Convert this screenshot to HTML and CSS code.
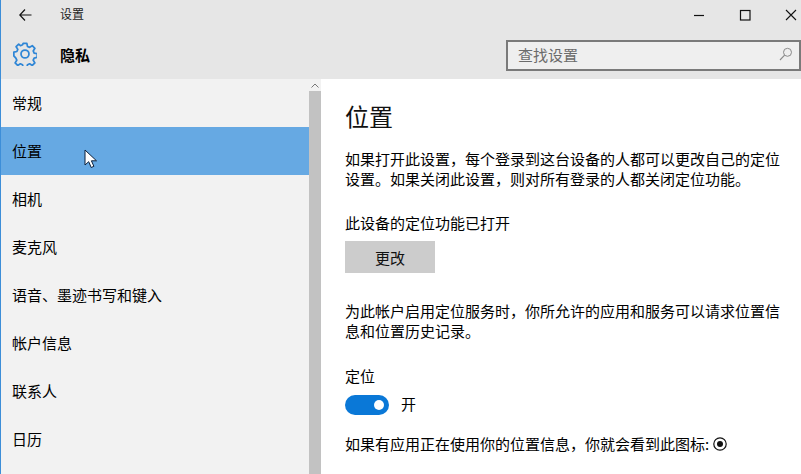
FILE: index.html
```html
<!DOCTYPE html>
<html lang="zh-CN">
<head>
<meta charset="utf-8">
<title>设置</title>
<link rel="stylesheet" href="styles.css">
</head>
<body>
<div class="window">
  <header class="header">
    <div class="titlebar">
      <svg class="back" width="13" height="12" viewBox="0 0 13 12"><path d="M6 .5.8 6 6 11.500M.8 6H12.500" fill="none" stroke="#111" stroke-width="1.200"/></svg>
      <span class="app-title">设置</span>
      <div class="controls">
        <svg class="ctl" width="46" height="30" viewBox="0 0 46 30"><path d="M18 15.500h10" stroke="#111" stroke-width="1.200"/></svg>
        <svg class="ctl" width="46" height="30" viewBox="0 0 46 30"><rect x="18.500" y="10.500" width="9.500" height="9.500" fill="none" stroke="#111" stroke-width="1.200"/></svg>
        <svg class="ctl" width="33" height="30" viewBox="0 0 33 30"><path d="M18 10 28 20M28 10 18 20" stroke="#111" stroke-width="1.100"/></svg>
      </div>
    </div>
    <div class="subbar">
      <svg class="gear" width="24" height="24" viewBox="0 0 26 26">
        <path d="M11 1.500h4l.7 3.300 2.300 1 2.900-1.800 2.800 2.800-1.800 2.900 1 2.300 3.300.7v4l-3.300.7-1 2.300 1.800 2.900-2.800 2.800-2.900-1.800-2.300 1-.7 3.300h-4l-.7-3.300-2.300-1-2.900 1.800-2.800-2.800 1.800-2.900-1-2.300L.9 15v-4l3.300-.7 1-2.300-1.800-2.900 2.800-2.800L8.100 4l2.300-1z" fill="none" stroke="#2f86d6" stroke-width="1.900" stroke-linejoin="round"/>
        <circle cx="13" cy="13" r="4.300" fill="none" stroke="#2f86d6" stroke-width="1.900"/>
      </svg>
      <span class="page-title">隐私</span>
      <div class="search">
        <span class="search-text">查找设置</span>
        <svg width="14" height="14" viewBox="0 0 14 14"><circle cx="8.500" cy="5.300" r="4" fill="none" stroke="#8a8a8a" stroke-width="1"/><path d="M5.600 8.200 1 13" stroke="#8a8a8a" stroke-width="1.100"/></svg>
      </div>
    </div>
  </header>
  <div class="body">
    <nav class="sidebar">
      <div class="nav-item">常规</div>
      <div class="nav-item selected">位置</div>
      <div class="nav-item">相机</div>
      <div class="nav-item">麦克风</div>
      <div class="nav-item">语音、墨迹书写和键入</div>
      <div class="nav-item">帐户信息</div>
      <div class="nav-item">联系人</div>
      <div class="nav-item">日历</div>
    </nav>
    <div class="scrollbar">
      <div class="scroll-up"><svg width="8" height="5" viewBox="0 0 8 5"><path d="M.5 4.500 4 1l3.500 3.500" fill="none" stroke="#777" stroke-width="1"/></svg></div>
      <div class="scroll-thumb"></div>
    </div>
    <main class="content">
      <h1 class="heading">位置</h1>
      <p class="para p-intro">如果打开此设置，每个登录到这台设备的人都可以更改自己的定位设置。如果关闭此设置，则对所有登录的人都关闭定位功能。</p>
      <p class="para p-status">此设备的定位功能已打开</p>
      <button class="btn">更改</button>
      <p class="para p-service">为此帐户启用定位服务时，你所允许的应用和服务可以请求位置信息和位置历史记录。</p>
      <p class="para p-label">定位</p>
      <div class="toggle-row">
        <span class="toggle"><span class="knob"></span></span>
        <span class="toggle-label">开</span>
      </div>
      <p class="para p-icon">如果有应用正在使用你的位置信息，你就会看到此图标:
        <svg class="loc-icon" width="14" height="14" viewBox="0 0 14 14"><circle cx="7" cy="7" r="6.200" fill="none" stroke="#111" stroke-width="1.200"/><circle cx="7" cy="7" r="3" fill="#111"/></svg>
      </p>
    </main>
  </div>
  <svg class="cursor" width="14" height="20" viewBox="0 0 14 20"><path d="M1 1v15l3.700-3.300 2.500 5.800 2.700-1.200-2.500-5.500H12.500z" fill="#fff" stroke="#0b1f3a" stroke-width="1"/></svg>
</div>
</body>
</html>
```
FILE: styles.css
```css
* { box-sizing: border-box; }
html, body { margin: 0; padding: 0; }
body {
  width: 801px;
  height: 474px;
  overflow: hidden;
  font-family: "Noto Sans CJK SC", "Noto Sans", sans-serif;
  font-size: 15px;
  color: #000;
  background: #fff;
}
.window {
  position: relative;
  width: 801px;
  height: 474px;
  display: flex;
  flex-direction: column;
  overflow: hidden;
  border-left: 1px solid #3d8ed8;
}
.header {
  height: 79px;
  flex: none;
  background: #e6e6e6;
  display: flex;
  flex-direction: column;
}
.titlebar {
  height: 30px;
  display: flex;
  align-items: center;
  padding-left: 18px;
}
.back { flex: none; margin-bottom: 1px; }
.app-title {
  margin-left: 28px;
  margin-bottom: 2px;
  font-size: 12px;
  line-height: 16px;
  color: #222;
}
.controls { margin-left: auto; display: flex; }
.ctl { display: block; flex: none; }
.subbar {
  height: 49px;
  display: flex;
  align-items: center;
  padding-left: 12px;
}
.gear { flex: none; margin-top: -1px; }
.page-title {
  margin-left: 23px;
  font-size: 15px;
  font-weight: 700;
  color: #000;
}
.search {
  margin-left: auto;
  margin-top: 2px;
  width: 295px;
  height: 31px;
  border: 2px solid #7a7a7a;
  background: #efefef;
  display: flex;
  align-items: center;
  justify-content: space-between;
  padding: 0 6px 3px 10px;
}
.search-text { color: #6b6b6b; font-size: 15px; }
.body {
  flex: 1;
  display: flex;
  min-height: 0;
}
.sidebar {
  width: 308px;
  flex: none;
  background: #f2f2f2;
}
.nav-item {
  height: 48px;
  display: flex;
  align-items: center;
  padding: 0 0 2px 11px;
  font-size: 15px;
}
.nav-item.selected { background: #66a9e3; }
.scrollbar {
  width: 12px;
  flex: none;
  background: #f2f2f2;
  display: flex;
  flex-direction: column;
}
.scroll-up {
  height: 12px;
  flex: none;
  display: flex;
  align-items: center;
  justify-content: center;
}
.scroll-thumb { flex: 1; background: #c2c2c2; }
.content {
  flex: 1;
  padding-left: 24px;
  background: #fff;
}
.heading {
  margin: 20px 0 0;
  font-size: 24px;
  font-weight: 400;
  line-height: 34px;
  color: #111;
}
.para {
  margin: 0;
  width: 440px;
  line-height: 20px;
  font-size: 15px;
}
.p-intro { margin-top: 16px; }
.p-status { margin-top: 24px; }
.btn {
  display: block;
  margin-top: 8px;
  width: 90px;
  height: 32px;
  border: 0;
  padding: 0;
  background: #cccccc;
  font: inherit;
  color: #111;
}
.p-service { margin-top: 28px; }
.p-label { margin-top: 25px; }
.toggle-row {
  display: flex;
  align-items: center;
  margin-top: 9px;
  height: 20px;
}
.toggle {
  width: 44px;
  height: 20px;
  border-radius: 10px;
  background: #0a78d7;
  display: flex;
  align-items: center;
  justify-content: flex-end;
  padding-right: 5px;
}
.knob {
  width: 10px;
  height: 10px;
  border-radius: 50%;
  background: #fff;
}
.toggle-label { margin-left: 12px; margin-bottom: 3px; }
.p-icon {
  margin-top: 19px;
  width: 450px;
  display: flex;
  align-items: center;
  gap: 4px;
}
.loc-icon { flex: none; }
.cursor {
  position: absolute;
  left: 83px;
  top: 149px;
}
```
